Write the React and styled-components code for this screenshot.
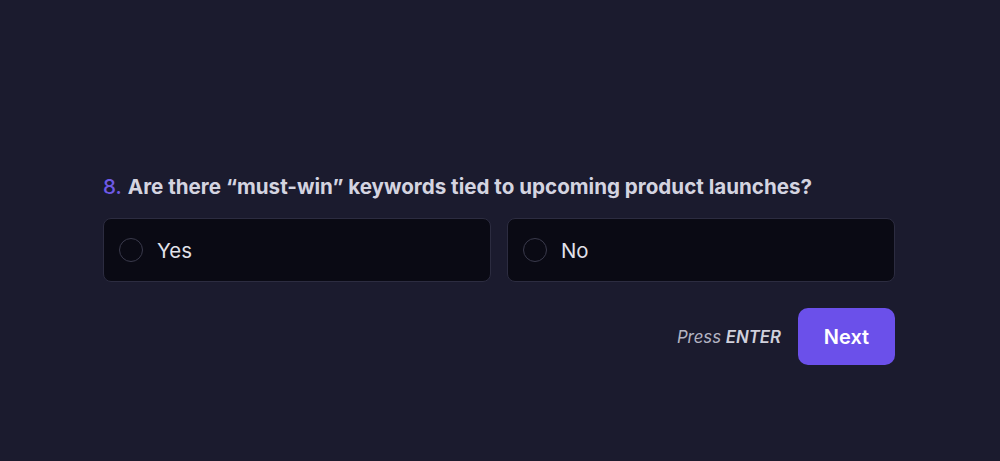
import styled, { createGlobalStyle } from 'styled-components'

const GlobalStyle = createGlobalStyle`
  html, body {
    margin: 0;
    padding: 0;
    background: #1b1b2e;
    font-family: Inter, "Noto Sans", sans-serif;
  }
  * { box-sizing: border-box; }
`

const Page = styled.main`
  min-height: 461px;
  padding: 173px 105px 0 103px;
  background: #1b1b2e;
`

const Question = styled.h2`
  margin: 0 0 17px;
  font-size: 20.6px;
  line-height: 28px;
  font-weight: 700;
  color: #d4d4e0;
`

const Number = styled.span`
  color: #6e5ae6;
  font-weight: 500;
  margin-right: 6px;
`

const Options = styled.div`
  display: grid;
  grid-template-columns: 1fr 1fr;
  gap: 16px;
`

const Option = styled.label`
  display: flex;
  align-items: center;
  gap: 14px;
  height: 64px;
  padding: 0 15px;
  background: #0a0a14;
  border: 1px solid #2c2c40;
  border-radius: 8px;
  font-size: 20.4px;
  color: #e2e2ea;
  cursor: pointer;
`

const Radio = styled.span`
  width: 24px;
  height: 24px;
  border-radius: 50%;
  border: 1px solid #3a3a4c;
  flex-shrink: 0;
`

const Footer = styled.div`
  display: flex;
  justify-content: flex-end;
  align-items: center;
  gap: 17px;
  margin-top: 26px;
`

const Hint = styled.span`
  font-style: italic;
  font-size: 16.8px;
  color: #b4b4c2;
  b { font-weight: 600; color: #d0d0dc; }
`

const NextButton = styled.button`
  width: 97px;
  height: 57px;
  border: none;
  border-radius: 10px;
  background: #6b50ea;
  color: #fff;
  font-family: inherit;
  font-size: 20px;
  font-weight: 600;
  cursor: pointer;
`

export default function App() {
  return (
    <>
      <GlobalStyle />
      <Page>
        <Question>
          <Number>8.</Number>
          Are there “must-win” keywords tied to upcoming product launches?
        </Question>
        <Options>
          <Option><Radio />Yes</Option>
          <Option><Radio />No</Option>
        </Options>
        <Footer>
          <Hint>Press <b>ENTER</b></Hint>
          <NextButton>Next</NextButton>
        </Footer>
      </Page>
    </>
  )
}
